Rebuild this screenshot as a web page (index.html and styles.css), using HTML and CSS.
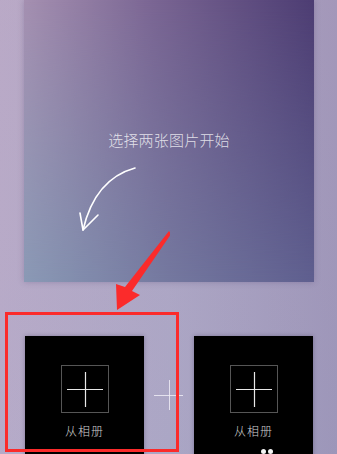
FILE: index.html
```html
<!DOCTYPE html>
<html lang="zh">
<head>
<meta charset="utf-8">
<link rel="stylesheet" href="styles.css">
</head>
<body>
<div class="page">
  <div class="hero">
    <p class="hint">选择两张图片开始</p>
    <svg class="doodle" width="70" height="72" viewBox="0 0 70 72">
      <path d="M61 3 Q21 14 9 65" fill="none" stroke="#fff" stroke-width="1.6" stroke-linecap="round"/>
      <path d="M6 48 L9 65 L24 50" fill="none" stroke="#fff" stroke-width="1.6" stroke-linecap="round" stroke-linejoin="round"/>
    </svg>
  </div>
  <div class="pickers">
    <div class="card">
      <div class="add-box">
        <svg width="46" height="46" viewBox="0 0 46 46"><path d="M5 23.5 H41 M23.5 6 V41" stroke="#e8e8e8" stroke-width="1.2"/></svg>
      </div>
      <div class="label">从相册</div>
    </div>
    <div class="join">
      <svg width="30" height="32" viewBox="0 0 30 32"><path d="M0 16.5 H29 M15.5 1 V31" stroke="#f2f0f8" stroke-opacity="0.8" stroke-width="1"/></svg>
    </div>
    <div class="card">
      <div class="add-box">
        <svg width="46" height="46" viewBox="0 0 46 46"><path d="M5 23.5 H41 M23.5 6 V41" stroke="#e8e8e8" stroke-width="1.2"/></svg>
      </div>
      <div class="label">从相册</div>
      <div class="dots"><span></span><span></span></div>
    </div>
  </div>
  <div class="highlight"></div>
  <svg class="pointer" width="60" height="82" viewBox="110 230 60 82">
    <polygon points="169,231 171,234 132,291 140,295 117,310 116,284 125,287" fill="#fb2b2b"/>
  </svg>
</div>
</body>
</html>
```
FILE: styles.css
```css
html, body {
  margin: 0;
  padding: 0;
}
body {
  width: 337px;
  height: 454px;
  overflow: hidden;
  font-family: "Noto Sans CJK SC", "Noto Sans", sans-serif;
}
.page {
  position: relative;
  width: 337px;
  height: 454px;
  overflow: hidden;
  background:
    linear-gradient(to bottom, rgba(190, 170, 200, 0.25), rgba(170, 180, 215, 0.15)),
    linear-gradient(to right, #b8a9c6 0%, #aba4c2 50%, #9a91b4 100%);
}
.hero {
  position: relative;
  width: 290px;
  height: 282px;
  margin-left: 24px;
  box-sizing: border-box;
  padding-top: 129px;
  background: linear-gradient(to right, #a590b1 0%, #7a6593 45%, #4d3d73 100%);
  box-shadow: 0 0 6px rgba(60, 40, 90, 0.25);
  display: flex;
  flex-direction: column;
}
.hero::before {
  content: "";
  position: absolute;
  inset: 0;
  background: linear-gradient(to right, #8a99b5 0%, #74789f 50%, #5f5f8f 100%);
  -webkit-mask-image: linear-gradient(to bottom, transparent 0%, rgba(0,0,0,0.5) 50%, #000 100%);
  mask-image: linear-gradient(to bottom, transparent 0%, rgba(0,0,0,0.5) 50%, #000 100%);
}
.hint {
  position: relative;
  margin: 0;
  text-align: center;
  font-size: 15px;
  line-height: 22px;
  font-weight: 300;
  color: rgba(255, 255, 255, 0.78);
  letter-spacing: 0.2px;
}
.doodle {
  position: relative;
  display: block;
  margin: 14px 0 0 50px;
}
.pickers {
  display: flex;
  margin: 54px 0 0 25px;
}
.card {
  width: 119px;
  height: 130px;
  background: #000;
  box-sizing: border-box;
  padding-top: 29px;
  display: flex;
  flex-direction: column;
  align-items: center;
  box-shadow: 0 0 4px rgba(40, 30, 70, 0.35);
}
.add-box {
  width: 48px;
  height: 48px;
  box-sizing: border-box;
  border: 1px solid #565656;
}
.add-box svg {
  display: block;
}
.label {
  margin-top: 10px;
  font-size: 12px;
  line-height: 16px;
  color: #cfcfcf;
  letter-spacing: 1px;
  font-weight: 300;
}
.dots {
  display: flex;
  gap: 2px;
  margin: 10px 0 0 26px;
}
.dots span {
  width: 5px;
  height: 5px;
  border-radius: 50%;
  background: #f4f4f4;
}
.join {
  width: 50px;
  display: flex;
  justify-content: center;
  align-items: flex-start;
  padding-top: 43px;
}
.join svg {
  display: block;
}
.highlight {
  position: absolute;
  left: 5px;
  top: 312px;
  width: 174px;
  height: 140px;
  box-sizing: border-box;
  border: 3px solid #fb2b2b;
}
.pointer {
  position: absolute;
  left: 110px;
  top: 230px;
}
```
